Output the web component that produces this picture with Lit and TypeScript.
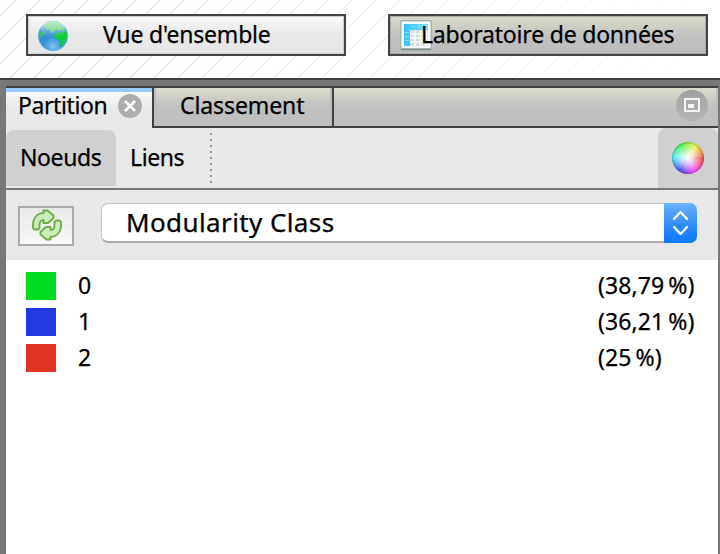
import { LitElement, html, svg, css } from "lit";
import { customElement } from "lit/decorators.js";
import { styleMap } from "lit/directives/style-map.js";

const classes = [
  { id: "0", share: "(38,79 %)", color: "#00dc22" },
  { id: "1", share: "(36,21 %)", color: "#2338e0" },
  { id: "2", share: "(25 %)", color: "#e23423" },
];

const globe = html`<svg width="32" height="32" viewBox="0 0 32 32">
  <defs>
    <radialGradient id="sea" cx=".5" cy=".85" r=".85">
      <stop offset="0" stop-color="#83c2f5" /><stop offset=".4" stop-color="#2f8fd6" />
      <stop offset=".75" stop-color="#3c96d0" /><stop offset="1" stop-color="#9cd0ea" />
    </radialGradient>
    <linearGradient id="shine" x1="0" y1="0" x2="0" y2="1">
      <stop offset="0" stop-color="#fff" stop-opacity=".6" /><stop offset="1" stop-color="#fff" stop-opacity="0" />
    </linearGradient>
  </defs>
  <circle cx="16" cy="16" r="14.700" fill="url(#sea)" stroke="#6fb2dc" />
  <path d="M8 5l5-3 6-1 5 2-1 3 3 2-3 3-4-2-2 3-3 1-1-4-4 1z" fill="#5fd078" />
  <path d="M2 13l3-2 2 2-1 3-3 1z" fill="#35c274" />
  <path d="M17 15l4-3 3 1 3-2 3 3v4l-3 6-4 3-1-2 2-4-5-2z" fill="#12cb3c" />
  <path d="M25 7l3 2 1 3-4-2z" fill="#45cc62" />
  <ellipse cx="16" cy="9" rx="12" ry="8" fill="url(#shine)" />
</svg>`;

const sheet = html`<svg width="32" height="31" viewBox="0 0 32 31">
  <defs><linearGradient id="head" x1="0" x2="1" y1="0" y2="0">
    <stop offset="0" stop-color="#35c3f8" /><stop offset="1" stop-color="#7ddcff" />
  </linearGradient></defs>
  <rect x=".75" y=".75" width="30.5" height="29" rx="1" fill="#f7fafa" stroke="#a5b2b2" stroke-width="1.5" />
  <path d="M1 29.3h30" stroke="#82908f" stroke-width="2" />
  <rect x="4" y="4" width="24" height="22" fill="#d4dddd" />
  <path d="M4 4h24v6H10v16H4z" fill="url(#head)" />
  <path d="M10 14h18M10 18h18M10 22h18M15 10v16M20.500 10v16M26 10v16" stroke="#fafafa" stroke-width="1.5" />
  <path d="M5 12.500h4M5 16.500h4M5 20.500h4M12 6.500h3M18 6.500h3M24 6.500h3" stroke="#8be0ff" />
</svg>`;

const close = html`<svg width="24" height="24" viewBox="0 0 24 24">
  <circle cx="12" cy="12" r="12" fill="#adadad" />
  <path d="M8 8l8 8M16 8l-8 8" stroke="#fff" stroke-width="2.800" stroke-linecap="square" />
</svg>`;

const minimize = html`<svg width="32" height="31" viewBox="0 0 32 31">
  <defs><linearGradient id="knob" x1="0" y1="0" x2="0" y2="1">
    <stop offset="0" stop-color="#999" /><stop offset=".3" stop-color="#a9a9a9" /><stop offset="1" stop-color="#b3b3b3" />
  </linearGradient></defs>
  <ellipse cx="16" cy="15.500" rx="16" ry="15.500" fill="url(#knob)" />
  <rect x="9" y="9" width="14" height="12" fill="none" stroke="#f4f4f4" stroke-width="2" />
  <rect x="12" y="14" width="6" height="4" fill="#f4f4f4" />
</svg>`;

const refresh = html`<svg width="32" height="32" viewBox="0 0 32 32">
  <g fill="#cdeebb" stroke="#73ad45" stroke-width="1.900" stroke-linejoin="round">
    <path d="M2 14C3 8 7 4 12.500 4V1.500h4L22.500 6.500v2.500L17 14h-4.500V11C10 11 8.500 13 8.500 16v3L7 20.500H3.500L2 19z" />
    <path d="M30 18C29 24 25 28 19.500 28v2.500h-4L9.500 25.500V23L15 18h4.500v3c2.500 0 4-2 4-5v-3L25 11.500h3.500L30 13z" />
  </g>
</svg>`;

const wheelColors = Array.from({ length: 48 }, (_, i) => {
  const a = (i * 7.5 * Math.PI) / 180;
  const b = ((i + 1.1) * 7.5 * Math.PI) / 180;
  const point = (t: number) => `${16 + 16 * Math.cos(t)} ${16 + 16 * Math.sin(t)}`;
  return svg`<path d="M16 16L${point(a)}A16 16 0 0 1 ${point(b)}Z" fill="hsl(${360 - i * 7.5} 85% 57%)" />`;
});

const wheel = html`<svg width="32" height="32" viewBox="0 0 32 32">
  <defs><radialGradient id="white">
    <stop offset="0" stop-color="#fff" /><stop offset=".45" stop-color="#fff" stop-opacity=".6" />
    <stop offset="1" stop-color="#fff" stop-opacity="0" />
  </radialGradient></defs>
  ${wheelColors}
  <circle cx="16" cy="16" r="16" fill="url(#white)" />
  <circle cx="16" cy="16" r="15.300" fill="none" stroke="#555" stroke-opacity=".22" stroke-width="1.500" />
</svg>`;

@customElement("app-root")
export class AppRoot extends LitElement {
  static styles = css`
    :host { display: flex; flex-direction: column; box-sizing: border-box; width: 720px; height: 554px; overflow: hidden;
      background: #787878; color: #000; font: 23px/32px "Noto Sans", "Open Sans", sans-serif; white-space: nowrap;
      -webkit-text-stroke: .25px #000; }
    * { box-sizing: border-box; }
    svg { display: block; flex: none; }
    .views { display: flex; gap: 42px; height: 80px; padding: 14px 12px 0 26px; border-bottom: 2px solid #404040;
      background: linear-gradient(90deg, transparent, #fff 700px),
        repeating-linear-gradient(135deg, #fff 0 10.300px, #e2e2e2 10.900px 11.700px, #fff 12.300px 16.970px); }
    .view { display: flex; width: 320px; height: 42px; border: 2px solid #444; padding: 4px 9px;
      background: linear-gradient(#f8f8f8, #e8e8e8 50%, #e6e6e6); box-shadow: inset 0 0 0 1px #ccc; }
    .view.active { padding: 4px 10px; background: linear-gradient(#dcdccb, #c0c0c0 55%, #bdbdbd); box-shadow: inset 0 0 0 1px #aaa; }
    .overview { margin: -2px 0 0 34px; letter-spacing: -.2px; }
    .lab { margin: -2px 0 0 -11px; letter-spacing: -.2px; }
    .panel { flex: 1; display: flex; flex-direction: column; margin: 6px 2px 0 6px; border-top: 2px solid #404040; background: #fff; }
    .tabs { display: flex; height: 40px; }
    .tab { display: flex; }
    .tab.current { width: 146px; border-top: 4px solid #99c9ff; padding: 2px 10px 0 12px; background: linear-gradient(#f8f8f8, #e8e8e8 50%); }
    .tab.current svg { margin: 0 0 0 auto; }
    .partition { margin-top: -5px; letter-spacing: -.4px; }
    .tab.other, .rest { background: linear-gradient(#dcdccb, #c0c0c0 50%, #bfbfbf); border-bottom: 2px solid #404040; }
    .tab.other { width: 182px; border-left: 2px solid #404040; border-right: 2px solid #404040; padding-left: 26px; box-shadow: inset 2px 0 #bdbdbd, inset -2px 0 #bdbdbd; }
    .ranking { margin-top: 1px; letter-spacing: -.1px; }
    .rest { flex: 1; display: flex; justify-content: flex-end; padding: 2px 10px 0 0; box-shadow: inset -2px 0 #bdbdbd; }
    .modes { display: flex; height: 62px; border-bottom: 2px solid #787878; background: #e8e8e8; }
    .mode { margin-top: 2px; height: 56px; padding: 11px 0 0 14px; letter-spacing: -.4px; }
    .mode.on { width: 110px; border-radius: 8px 8px 0 0; background: #d0d0d0; }
    .links { width: 94px; }
    .dots { width: 2px; height: 50px; margin-top: 5px; background: repeating-linear-gradient(#999 0 2px, transparent 2px 6px); }
    .palette { display: flex; width: 60px; height: 60px; margin-left: auto; padding: 14px; border-radius: 8px 8px 0 0; background: #d0d0d0; }
    .setting { display: flex; height: 70px; padding: 13px 21px 0 12px; background: #e8e8e8; }
    .reload { width: 56px; height: 40px; margin-top: 3px; padding: 1px 11px; border: 2px solid #aaa; background: linear-gradient(#e8e8e8, #f8f8f8); }
    .select { display: flex; flex: 1; height: 40px; margin-left: 27px; border: 1px solid #c4c4c4; border-bottom: 2px solid #ababab; border-right: 0;
      border-radius: 7px; background: #fff; padding-left: 24px; font-size: 26px; letter-spacing: .4px; }
    .value { margin-top: 2px; }
    .stepper { width: 33px; height: 40px; margin: -1px 0 0 auto; border-radius: 0 7px 7px 0; background: linear-gradient(#6bb3fa, #2a88fb 60%, #087aff); }
    .classes { display: flex; flex-direction: column; gap: 8px; padding: 12px 0 0 20px; }
    .entry { display: flex; height: 28px; }
    .swatch { width: 30px; height: 28px; }
    .name { width: 520px; margin: -3px 0 0 22px; }
    .share { margin-top: -3px; letter-spacing: .1px; word-spacing: -2px; }
  `;

  render() {
    return html`
      <div class="views">
        <div class="view">${globe}<span class="overview">Vue d'ensemble</span></div>
        <div class="view active">${sheet}<span class="lab">Laboratoire de données</span></div>
      </div>
      <div class="panel">
        <div class="tabs">
          <div class="tab current"><span class="partition">Partition</span>${close}</div>
          <div class="tab other"><span class="ranking">Classement</span></div>
          <div class="rest">${minimize}</div>
        </div>
        <div class="modes">
          <div class="mode on">Noeuds</div>
          <div class="mode links">Liens</div>
          <div class="dots"></div>
          <div class="palette">${wheel}</div>
        </div>
        <div class="setting">
          <div class="reload">${refresh}</div>
          <div class="select">
            <span class="value">Modularity Class</span>
            <svg class="stepper" viewBox="0 0 33 40">
              <path d="M10 16l6.500-7 6.500 7M10 24l6.500 7 6.500-7" fill="none" stroke="#fff" stroke-width="2.300" stroke-linecap="round" stroke-linejoin="round" />
            </svg>
          </div>
        </div>
        <div class="classes">
          ${classes.map((c) => html`<div class="entry">
            <div class="swatch" style=${styleMap({ background: c.color })}></div>
            <span class="name">${c.id}</span><span class="share">${c.share}</span>
          </div>`)}
        </div>
      </div>`;
  }
}
